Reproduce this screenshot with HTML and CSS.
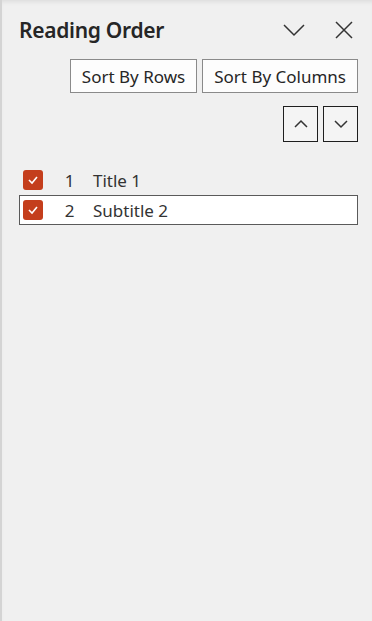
FILE: index.html
```html
<!DOCTYPE html>
<html>
<head>
<meta charset="utf-8">
<link rel="stylesheet" href="styles.css">
</head>
<body>
<div class="pane">
  <div class="header">
    <h1 class="title">Reading Order</h1>
    <div class="header-icons">
      <svg class="hicon" width="22" height="14" viewBox="0 0 22 14"><path d="M1 2 L11 12 L21 2" fill="none" stroke="#333" stroke-width="1.5"/></svg>
      <svg class="hicon" width="18" height="18" viewBox="0 0 18 18"><path d="M1 1 L17 17 M17 1 L1 17" fill="none" stroke="#333" stroke-width="1.5"/></svg>
    </div>
  </div>
  <div class="sort-row">
    <button class="btn">Sort By Rows</button>
    <button class="btn">Sort By Columns</button>
  </div>
  <div class="move-row">
    <button class="mbtn"><svg width="16" height="10" viewBox="0 0 16 10"><path d="M2 8 L8 2 L14 8" fill="none" stroke="#333" stroke-width="1.5"/></svg></button>
    <button class="mbtn"><svg width="16" height="10" viewBox="0 0 16 10"><path d="M2 2 L8 8 L14 2" fill="none" stroke="#333" stroke-width="1.5"/></svg></button>
  </div>
  <ul class="list">
    <li class="item">
      <span class="cb"><svg width="12" height="10" viewBox="0 0 12 10"><path d="M2 5 L5 8 L10 2" fill="none" stroke="#fff" stroke-width="1.6"/></svg></span>
      <span class="num">1</span>
      <span class="label">Title 1</span>
    </li>
    <li class="item selected">
      <span class="cb"><svg width="12" height="10" viewBox="0 0 12 10"><path d="M2 5 L5 8 L10 2" fill="none" stroke="#fff" stroke-width="1.6"/></svg></span>
      <span class="num">2</span>
      <span class="label">Subtitle 2</span>
    </li>
  </ul>
</div>
</body>
</html>
```
FILE: styles.css
```css
* { box-sizing: border-box; }
html, body { margin: 0; padding: 0; height: 100%; }
body {
  background: #f0f0f0;
  font-family: "Noto Sans", "Open Sans", sans-serif;
  color: #262626;
}
.pane {
  height: 621px;
  border-left: 2px solid #d4d4d4;
  box-shadow: inset 0 4px 4px -2px rgba(0,0,0,0.08);
  padding: 14px 14px 0 17px;
}
.header {
  display: flex;
  align-items: center;
  justify-content: space-between;
  height: 32px;
}
.title {
  margin: 0;
  font-size: 21px;
  font-weight: 600;
  color: #262626;
  letter-spacing: -0.3px;
}
.header-icons {
  display: flex;
  align-items: center;
  gap: 30px;
  padding-right: 5px;
}
.hicon { display: block; }
.sort-row {
  display: flex;
  justify-content: flex-end;
  gap: 5px;
  margin-top: 13px;
}
.btn {
  font-family: inherit;
  font-size: 17px;
  color: #262626;
  background: #fdfdfd;
  border: 1px solid #8a8a8a;
  height: 34px;
  padding: 0 11px;
  margin: 0;
}
.move-row {
  display: flex;
  justify-content: flex-end;
  gap: 5px;
  margin-top: 13px;
}
.mbtn {
  width: 35px;
  height: 36px;
  margin: 0;
  padding: 0;
  border: 1px solid #1e1e1e;
  background: #f4f4f4;
  display: flex;
  align-items: center;
  justify-content: center;
}
.list {
  list-style: none;
  margin: 23px 0 0 0;
  padding: 0;
}
.item {
  display: flex;
  align-items: center;
  height: 30px;
  border: 1px solid transparent;
  padding-left: 3px;
  font-size: 17px;
  color: #333;
}
.item.selected {
  background: #fff;
  border-color: #5a5a5a;
}
.cb {
  width: 20px;
  height: 20px;
  border-radius: 3px;
  background: #c43e1c;
  display: flex;
  align-items: center;
  justify-content: center;
}
.num {
  width: 50px;
  text-align: center;
  padding-left: 3px;
}
.label { }
```
